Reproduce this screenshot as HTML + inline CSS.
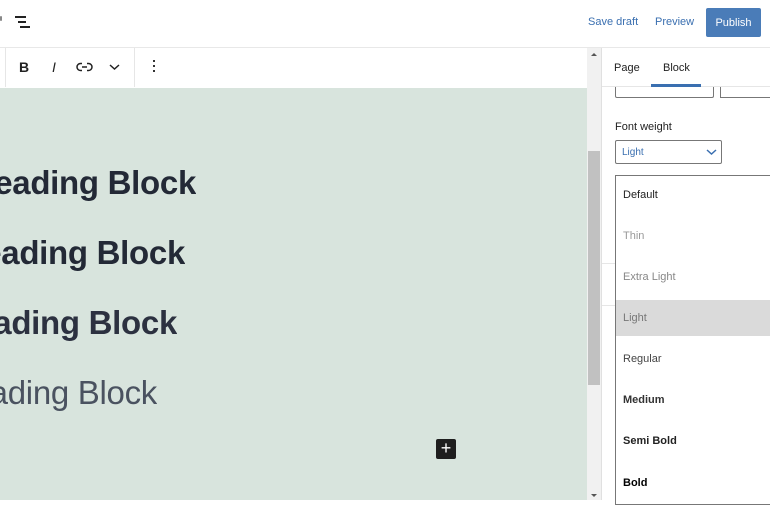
<!DOCTYPE html>
<html><head><style>
*{margin:0;padding:0;box-sizing:border-box}
body{width:770px;height:500px;overflow:hidden;background:#fff;font-family:"Liberation Sans",sans-serif;position:relative}
.a{position:absolute}
.h{position:absolute;right:0;font-size:33px;color:#232936;white-space:nowrap;letter-spacing:-0.3px}
.it{position:absolute;left:7px;font-size:11px;color:#222}
</style></head><body>
<div class="a" style="left:0;top:47px;width:770px;height:1px;background:#e8e8e8"></div>
<div class="a" style="left:0;top:16px;width:2px;height:5px;background:#888;border-radius:1px"></div>
<div class="a" style="left:15px;top:16px;width:11px;height:1.5px;background:#222"></div>
<div class="a" style="left:18px;top:21px;width:8px;height:1.5px;background:#222"></div>
<div class="a" style="left:20px;top:26px;width:10px;height:1.5px;background:#222"></div>
<div class="a" style="left:588px;top:16px;font-size:11px;color:#3a6fb0">Save draft</div>
<div class="a" style="left:655px;top:16px;font-size:11px;color:#3a6fb0">Preview</div>
<div class="a" style="left:706px;top:8px;width:55px;height:29px;background:#4a7cb8;border-radius:2px;color:#fff;font-size:11px;text-align:center;line-height:30px">Publish</div>
<div class="a" style="left:5px;top:48px;width:1px;height:39px;background:#e6e6e6"></div>
<div class="a" style="left:134px;top:48px;width:1px;height:39px;background:#e6e6e6"></div>
<div class="a" style="left:19px;top:59px;font-size:14px;font-weight:bold;color:#222">B</div>
<div class="a" style="left:52px;top:59px;font-size:14px;font-style:italic;color:#222">I</div>
<svg class="a" style="left:76px;top:60px" width="17" height="14" viewBox="0 0 17 14"><path d="M6 3.5H4.5a3.5 3.5 0 0 0 0 7H6M11 3.5h1.5a3.5 3.5 0 0 1 0 7H11M6 7h5" fill="none" stroke="#222" stroke-width="1.5"/></svg>
<svg class="a" style="left:109px;top:64px" width="11" height="7"><path d="M1 1l4.5 4 4.5-4" fill="none" stroke="#222" stroke-width="1.5"/></svg>
<div class="a" style="left:153px;top:60px;width:2px;height:2px;background:#333;box-shadow:0 5px 0 #333,0 10px 0 #333"></div>
<div class="a" style="left:0;top:88px;width:587px;height:412px;background:#d8e4dd"></div>
<div class="a" style="left:0;top:164px;width:196px;height:40px;overflow:hidden"><span class="h" style="font-weight:bold;top:0">Heading Block</span></div>
<div class="a" style="left:0;top:234px;width:185px;height:40px;overflow:hidden"><span class="h" style="font-weight:bold;top:0">Heading Block</span></div>
<div class="a" style="left:0;top:304px;width:177px;height:40px;overflow:hidden"><span class="h" style="font-weight:bold;top:0;color:#2c3140">Heading Block</span></div>
<div class="a" style="left:0;top:374px;width:157px;height:40px;overflow:hidden"><span class="h" style="top:0;color:#4a5260">Heading Block</span></div>
<div class="a" style="left:436px;top:439px;width:20px;height:20px;background:#1e1e1e;border-radius:2px;color:#fff;font-size:18px;line-height:19px;text-align:center">+</div>
<div class="a" style="left:587px;top:48px;width:14px;height:452px;background:#f1f1f1"></div>
<div class="a" style="left:588px;top:151px;width:12px;height:234px;background:#c1c1c1"></div>
<div class="a" style="left:591px;top:53px;width:0;height:0;border-left:3px solid transparent;border-right:3px solid transparent;border-bottom:3px solid #555"></div>
<div class="a" style="left:591px;top:494px;width:0;height:0;border-left:3px solid transparent;border-right:3px solid transparent;border-top:3px solid #555"></div>
<div class="a" style="left:601px;top:48px;width:1px;height:452px;background:#e0e0e0"></div>
<div class="a" style="left:615px;top:80px;width:99px;height:18px;border:1px solid #777;border-top:none;border-radius:0 0 2px 2px"></div>
<div class="a" style="left:720px;top:80px;width:60px;height:18px;border:1px solid #777;border-top:none"></div>
<div class="a" style="left:602px;top:48px;width:168px;height:39px;background:#fff;border-bottom:1px solid #e6e6e6"></div>
<div class="a" style="left:614px;top:62px;font-size:11px;color:#1e1e1e">Page</div>
<div class="a" style="left:663px;top:62px;font-size:11px;color:#1e1e1e">Block</div>
<div class="a" style="left:651px;top:84px;width:50px;height:3px;background:#3a6fb0"></div>
<div class="a" style="left:615px;top:121px;font-size:11px;color:#1e1e1e">Font weight</div>
<div class="a" style="left:615px;top:140px;width:107px;height:24px;border:1px solid #777;border-radius:2px"></div>
<div class="a" style="left:622px;top:147px;font-size:10px;color:#3a6fb0">Light</div>
<svg class="a" style="left:706px;top:149px" width="11" height="7"><path d="M1 1l4.5 4 4.5-4" fill="none" stroke="#3a6fb0" stroke-width="1.5"/></svg>
<div class="a" style="left:602px;top:263px;width:14px;height:1px;background:#e6e6e6"></div>
<div class="a" style="left:602px;top:305px;width:14px;height:1px;background:#e6e6e6"></div>
<div class="a" style="left:615px;top:175px;width:160px;height:330px;border:1px solid #777;background:#fff">
<div class="a" style="left:0;top:124px;width:160px;height:36px;background:#dadada"></div>
<div class="it" style="top:13px">Default</div>
<div class="it" style="top:54px;color:#999">Thin</div>
<div class="it" style="top:95px;color:#888">Extra Light</div>
<div class="it" style="top:136px;color:#777">Light</div>
<div class="it" style="top:177px;color:#444">Regular</div>
<div class="it" style="top:218px;font-weight:bold;color:#333">Medium</div>
<div class="it" style="top:259px;font-weight:bold">Semi Bold</div>
<div class="it" style="top:301px;font-weight:bold;color:#000">Bold</div>
</div>
</body></html>
